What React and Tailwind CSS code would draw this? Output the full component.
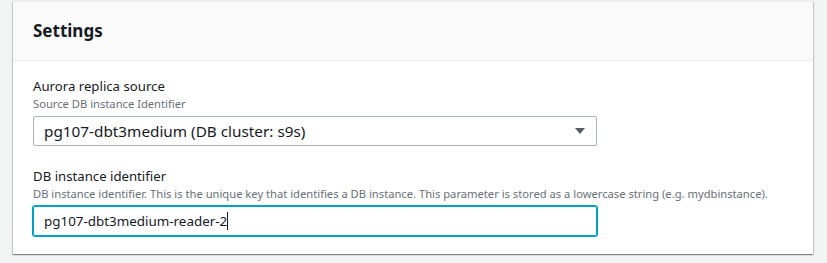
export default function App() {
  const font = { fontFamily: '"Noto Sans", "Open Sans", Arial, sans-serif' };
  return (
    <div className="w-[827px] h-[263px] bg-[#f2f3f3] pt-px pl-[13px]" style={font}>
      <div className="w-[800px] bg-white border-t border-[#eaeded] shadow-[0_1px_1px_0_rgba(0,28,36,0.3),1px_1px_1px_0_rgba(0,28,36,0.15),-1px_1px_1px_0_rgba(0,28,36,0.15)]">
        <div className="h-[59px] bg-[#fafafa] border-b border-[#eaeded] flex items-center px-5">
          <h2 className="text-[17px] leading-[22px] font-bold text-[#16191f]">Settings</h2>
        </div>
        <div className="px-5 pt-[15px] pb-[18px]">
          <div className="text-[13.2px] leading-[20px] text-[#16191f]">Aurora replica source</div>
          <div className="text-[11.2px] leading-[16px] text-[#687078]">Source DB instance Identifier</div>
          <div className="mt-1 w-[564px] h-[30px] border border-[#aab7b8] rounded-[2px] flex items-center justify-between pl-[10px] pr-[10px]">
            <span className="text-[15.3px] text-[#16191f] whitespace-pre">pg107-dbt3medium (DB cluster: s9s)</span>
            <svg width="10" height="6" viewBox="0 0 10 6" className="mr-px">
              <path d="M0 0 H10 L5 6 Z" fill="#545b64" />
            </svg>
          </div>
          <div className="mt-5 text-[13.2px] leading-[20px] text-[#16191f]">DB instance identifier</div>
          <div className="text-[11.2px] leading-[16px] text-[#687078] whitespace-nowrap">
            DB instance identifier. This is the unique key that identifies a DB instance. This parameter is stored as a lowercase string (e.g. mydbinstance).
          </div>
          <div className="mt-1 w-[564px] h-[30px] border border-[#00a1c9] shadow-[0_0_0_1px_#00a1c9] rounded-[2px] flex items-center pl-[10px]">
            <span className="text-[13.4px] text-[#16191f]">pg107-dbt3medium-reader-2</span>
            <span className="w-px h-[18px] bg-[#16191f]"></span>
          </div>
        </div>
      </div>
    </div>
  );
}
